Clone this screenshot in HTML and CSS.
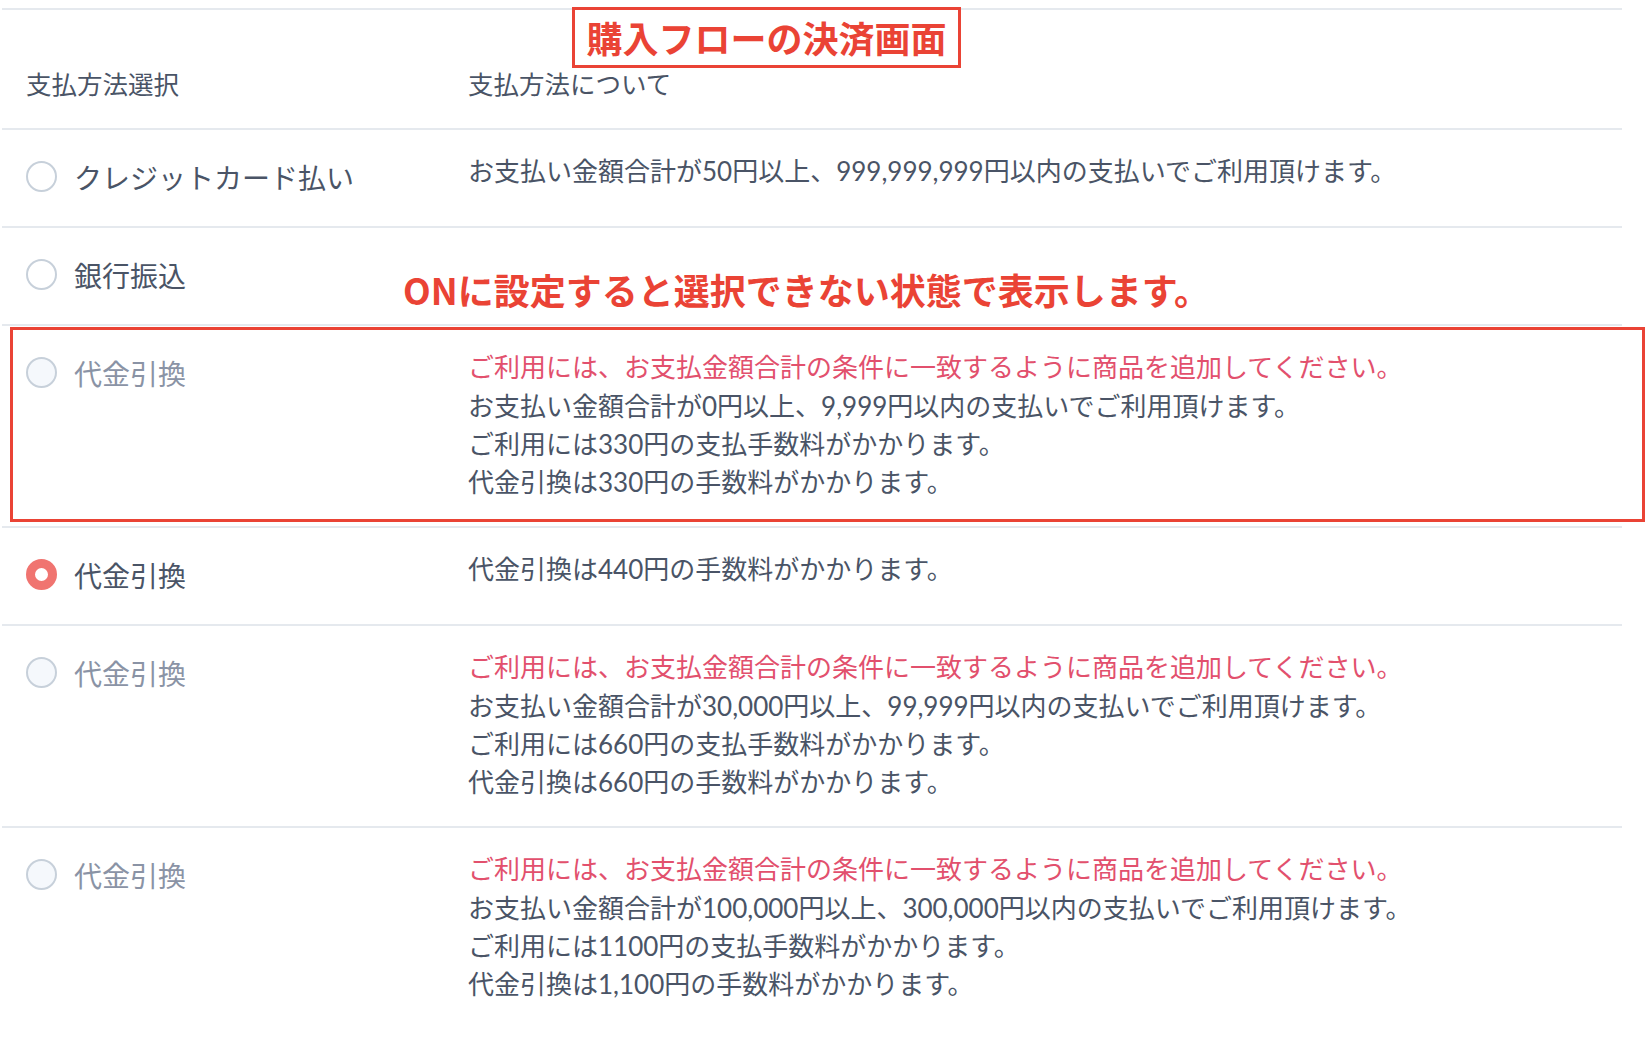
FILE: index.html
```html
<!DOCTYPE html>
<html lang="ja">
<head>
    <meta charset="UTF-8">
    <meta name="viewport" content="width=device-width, initial-scale=1.0">
    <title>購入フローの決済画面</title>
    <link rel="stylesheet" href="styles.css">
</head>
<body>
    <div class="payment">
        <div class="row head">
            <div class="col-select">支払方法選択</div>
            <div class="col-desc">支払方法について</div>
        </div>

        <div class="row">
            <label class="col-select method">
                <span class="radio"></span>クレジットカード払い
            </label>
            <div class="col-desc">
                <p>お支払い金額合計が50円以上、999,999,999円以内の支払いでご利用頂けます。</p>
            </div>
        </div>

        <div class="row">
            <label class="col-select method">
                <span class="radio"></span>銀行振込
            </label>
            <div class="col-desc"></div>
        </div>

        <div class="row">
            <label class="col-select method disabled">
                <span class="radio"></span>代金引換
            </label>
            <div class="col-desc">
                <p class="warn">ご利用には、お支払金額合計の条件に一致するように商品を追加してください。</p>
                <p>お支払い金額合計が0円以上、9,999円以内の支払いでご利用頂けます。</p>
                <p>ご利用には330円の支払手数料がかかります。</p>
                <p>代金引換は330円の手数料がかかります。</p>
            </div>
        </div>

        <div class="row">
            <label class="col-select method">
                <span class="radio checked"></span>代金引換
            </label>
            <div class="col-desc">
                <p>代金引換は440円の手数料がかかります。</p>
            </div>
        </div>

        <div class="row">
            <label class="col-select method disabled">
                <span class="radio"></span>代金引換
            </label>
            <div class="col-desc">
                <p class="warn">ご利用には、お支払金額合計の条件に一致するように商品を追加してください。</p>
                <p>お支払い金額合計が30,000円以上、99,999円以内の支払いでご利用頂けます。</p>
                <p>ご利用には660円の支払手数料がかかります。</p>
                <p>代金引換は660円の手数料がかかります。</p>
            </div>
        </div>

        <div class="row last">
            <label class="col-select method disabled">
                <span class="radio"></span>代金引換
            </label>
            <div class="col-desc">
                <p class="warn">ご利用には、お支払金額合計の条件に一致するように商品を追加してください。</p>
                <p>お支払い金額合計が100,000円以上、300,000円以内の支払いでご利用頂けます。</p>
                <p>ご利用には1100円の支払手数料がかかります。</p>
                <p>代金引換は1,100円の手数料がかかります。</p>
            </div>
        </div>

        <!-- annotations drawn over the screen -->
        <div class="note-title">購入フローの決済画面</div>
        <div class="note-text">ONに設定すると選択できない状態で表示します。</div>
        <div class="note-box"></div>
    </div>
</body>
</html>
```

FILE: styles.css
```css
body, html {
    margin: 0;
    padding: 0;
    background: #ffffff;
    font-family: Lato, "Noto Sans CJK JP", sans-serif;
    color: #4a5466;
}

.payment {
    position: relative;
    width: 1620px;
    margin: 8px 0 0 2px;
    border-top: 2px solid #e5e9ee;
}

.row {
    display: flex;
    padding: 22px 0 25px;
    border-bottom: 2px solid #e5e9ee;
}

.row.last {
    border-bottom: none;
}

.row.head {
    padding: 55px 0 25px;
    line-height: 38px;
}

.col-select {
    width: 466px;
    flex: none;
    padding-left: 24px;
    box-sizing: border-box;
    font-size: 25.5px;
}

.col-desc {
    flex: 1;
    font-size: 26px;
    line-height: 38.25px;
}

.head .col-desc {
    font-size: 25.5px;
}

.col-desc p {
    margin: 0;
}

.col-desc .warn {
    color: #e2506d;
}

.method {
    display: flex;
    align-items: center;
    gap: 17px;
    height: 49px;
    font-size: 28px;
    color: #4a5466;
}

.method.disabled {
    color: #8a93a5;
}

.radio {
    width: 31px;
    height: 31px;
    box-sizing: border-box;
    border: 2px solid #c7d0da;
    border-radius: 50%;
    background: #ffffff;
}

.method.disabled .radio {
    background: #f5f8fc;
}

.radio.checked {
    border: 9px solid #f07470;
    background: #ffffff;
}

.note-title {
    position: absolute;
    left: 570px;
    top: -3px;
    width: 389px;
    height: 61px;
    box-sizing: border-box;
    border: 3px solid #ea4335;
    text-align: center;
    font-family: "Noto Sans CJK JP", sans-serif;
    font-weight: 700;
    font-size: 36px;
    line-height: 55px;
    color: #ea4335;
}

.note-text {
    position: absolute;
    left: 401px;
    top: 257px;
    font-family: "Noto Sans CJK JP", sans-serif;
    font-weight: 700;
    font-size: 36px;
    line-height: 44px;
    color: #ea4335;
}

.note-box {
    position: absolute;
    left: 8px;
    top: 317px;
    width: 1635px;
    height: 195px;
    box-sizing: border-box;
    border: 3px solid #ea4335;
}
```
